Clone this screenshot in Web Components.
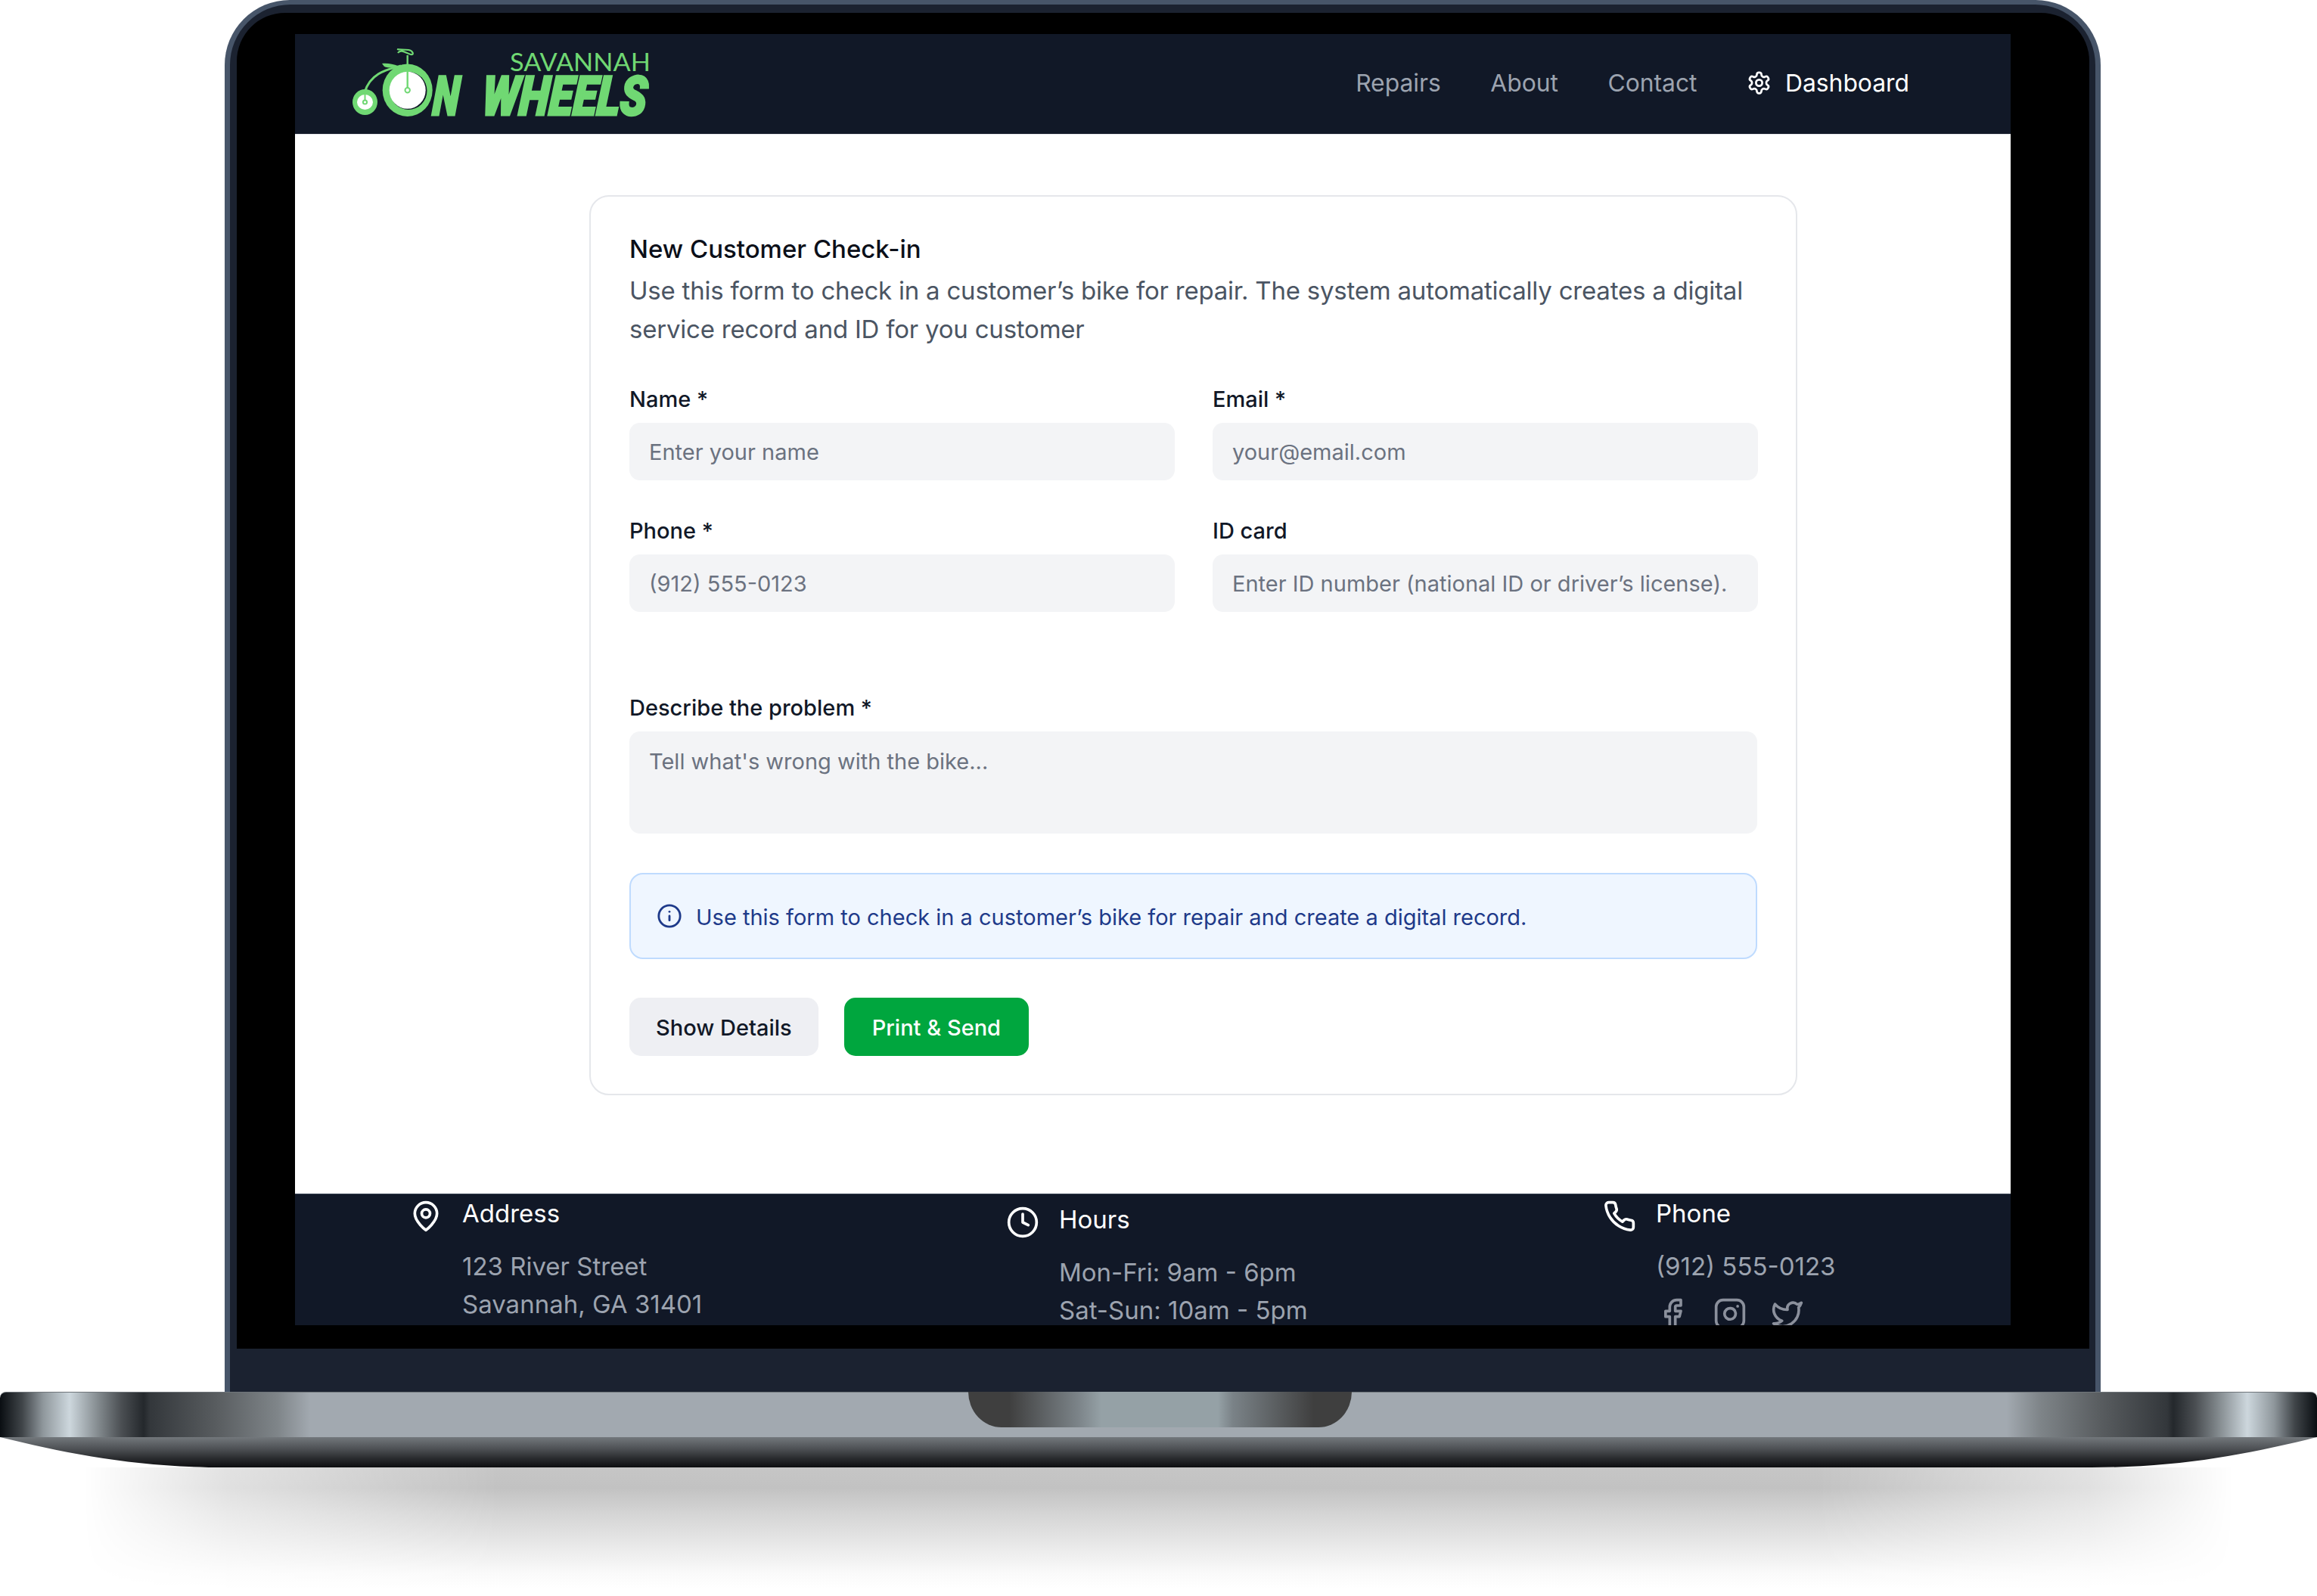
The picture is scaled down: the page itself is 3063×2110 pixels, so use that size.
<!DOCTYPE html>
<html lang="en">
<head>
<meta charset="utf-8">
<title>Savannah On Wheels</title>
<style>
  html, body { margin: 0; background: #fff; }
  body { font-family: Inter, "Liberation Sans", sans-serif; width: 3063px; height: 2110px; overflow: hidden; }
</style>
</head>
<body>
<laptop-mockup>
  <site-nav></site-nav>
  <checkin-form></checkin-form>
  <site-footer></site-footer>
</laptop-mockup>

<script>
const ICONS = {
  settings: '<path d="M12.22 2h-.44a2 2 0 0 0-2 2v.18a2 2 0 0 1-1 1.73l-.43.25a2 2 0 0 1-2 0l-.15-.08a2 2 0 0 0-2.73.73l-.22.38a2 2 0 0 0 .73 2.73l.15.1a2 2 0 0 1 1 1.72v.51a2 2 0 0 1-1 1.74l-.15.09a2 2 0 0 0-.73 2.73l.22.38a2 2 0 0 0 2.73.73l.15-.08a2 2 0 0 1 2 0l.43.25a2 2 0 0 1 1 1.73V20a2 2 0 0 0 2 2h.44a2 2 0 0 0 2-2v-.18a2 2 0 0 1 1-1.73l.43-.25a2 2 0 0 1 2 0l.15.08a2 2 0 0 0 2.73-.73l.22-.39a2 2 0 0 0-.73-2.73l-.15-.08a2 2 0 0 1-1-1.74v-.5a2 2 0 0 1 1-1.74l.15-.09a2 2 0 0 0 .73-2.73l-.22-.38a2 2 0 0 0-2.73-.73l-.15.08a2 2 0 0 1-2 0l-.43-.25a2 2 0 0 1-1-1.73V4a2 2 0 0 0-2-2z"/><circle cx="12" cy="12" r="3"/>',
  info: '<circle cx="12" cy="12" r="10"/><path d="M12 16v-4"/><path d="M12 8h.01"/>',
  pin: '<path d="M20 10c0 6-8 12-8 12s-8-6-8-12a8 8 0 0 1 16 0Z"/><circle cx="12" cy="10" r="3"/>',
  clock: '<circle cx="12" cy="12" r="10"/><polyline points="12 6 12 12 16 14"/>',
  phone: '<path d="M22 16.92v3a2 2 0 0 1-2.18 2 19.79 19.79 0 0 1-8.63-3.07 19.5 19.5 0 0 1-6-6 19.79 19.79 0 0 1-3.07-8.67A2 2 0 0 1 4.11 2h3a2 2 0 0 1 2 1.72 12.84 12.84 0 0 0 .7 2.81 2 2 0 0 1-.45 2.11L8.09 9.91a16 16 0 0 0 6 6l1.27-1.27a2 2 0 0 1 2.11-.45 12.84 12.84 0 0 0 2.81.7A2 2 0 0 1 22 16.92z"/>',
  facebook: '<path d="M18 2h-3a5 5 0 0 0-5 5v3H7v4h3v8h4v-8h3l1-4h-4V7a1 1 0 0 1 1-1h3z"/>',
  instagram: '<rect x="2" y="2" width="20" height="20" rx="5" ry="5"/><path d="M16 11.37A4 4 0 1 1 12.63 8 4 4 0 0 1 16 11.37z"/><line x1="17.5" y1="6.5" x2="17.51" y2="6.5"/>',
  twitter: '<path d="M22 4s-.7 2.1-2 3.4c1.6 10-9.4 17.3-18 11.6 2.2.1 4.4-.6 6-2C3 15.5.5 9.6 3 5c2.2 2.6 5.6 4.1 9 4-.9-4.2 4-6.6 7-3.8 1.1 0 3-1.2 3-1.2z"/>'
};

class UiIcon extends HTMLElement {
  connectedCallback() {
    const size = this.getAttribute('size') || 44;
    this.attachShadow({ mode: 'open' });
    this.shadowRoot.innerHTML = `
      <style>
        :host { display: block; flex: none; width: ${size}px; height: ${size}px; }
        svg { display: block; width: 100%; height: 100%; fill: none; stroke: currentColor; stroke-width: 2; stroke-linecap: round; stroke-linejoin: round; }
      </style>
      <svg viewBox="0 0 24 24">${ICONS[this.getAttribute('name')]}</svg>`;
  }
}
customElements.define('ui-icon', UiIcon);

class LaptopMockup extends HTMLElement {
  connectedCallback() {
    this.attachShadow({ mode: 'open' });
    this.shadowRoot.innerHTML = `
      <style>
        :host { display: block; width: 3063px; }
        .lid {
          margin-left: 297px;
          width: 2480px;
          height: 1840px;
          box-sizing: border-box;
          background: #475569;
          border-radius: 86px 86px 0 0;
          padding: 6px 7px 0;
          display: flex;
        }
        .bezel {
          flex: 1;
          min-width: 0;
          display: flex;
          background: #1b2230;
          border-radius: 80px 80px 0 0;
          padding: 11px 8px 57px 9px;
        }
        .glass {
          flex: 1;
          min-width: 0;
          display: flex;
          background: #000;
          border-radius: 64px 64px 0 0;
          padding: 28px 104px 31px 77px;
        }
        .screen {
          flex: 1;
          min-width: 0;
          display: flex;
          flex-direction: column;
          background: #fff;
          overflow: hidden;
        }
        .base { position: relative; height: 100px; }
        .deck {
          height: 60px;
          box-sizing: border-box;
          border-top: 1px solid #6f757a;
          border-radius: 8px 8px 0 0;
          background: linear-gradient(to right,
            #0a0e12 0, #3f4448 29px, #8f979c 57px, #cdd7dd 92px, #7f868a 132px, #4a4e52 161px, #24282c 190px,
            #33373b 198px, #595d60 287px, #7f8589 367px, #a2a9b0 410px,
            #a2a9b0 calc(100% - 410px), #7f8589 calc(100% - 367px), #595d60 calc(100% - 287px), #33373b calc(100% - 198px),
            #24282c calc(100% - 190px), #4a4e52 calc(100% - 161px), #7f868a calc(100% - 132px), #cdd7dd calc(100% - 92px),
            #8f979c calc(100% - 57px), #3f4448 calc(100% - 29px), #0a0e12 100%);
        }
        .lip {
          height: 40px;
          background: linear-gradient(to bottom, #73787c 0, #4c4f53 40%, #2a2c2f 70%, #0d0e10 100%);
          clip-path: path('M0 0 C90 22 180 40 298 40 H2765 C2883 40 2973 22 3063 0 Z');
        }
        .notch {
          position: absolute;
          left: 1280px;
          top: 0;
          width: 507px;
          height: 47px;
          border-radius: 0 0 44px 44px / 0 0 47px 47px;
          background: linear-gradient(to right, #3f3f3f 0, #3f3f3f 54px, #7c8489 146px, #95a1a6 176px, #95a1a6 330px, #7a8287 350px, #3f3f3f 457px, #3f3f3f 100%);
        }
        .shadow {
          height: 170px;
          background: linear-gradient(to bottom, #c6c6c6 0, #c2c2c2 27px, #d4d4d4 60px, #ececec 110px, #fafafa 140px, #fff 160px);
          -webkit-mask-image: linear-gradient(to right, transparent 110px, rgba(0,0,0,.5) 300px, #000 660px, #000 calc(100% - 660px), rgba(0,0,0,.5) calc(100% - 300px), transparent calc(100% - 110px));
          mask-image: linear-gradient(to right, transparent 110px, rgba(0,0,0,.5) 300px, #000 660px, #000 calc(100% - 660px), rgba(0,0,0,.5) calc(100% - 300px), transparent calc(100% - 110px));
        }
      </style>
      <div class="lid"><div class="bezel"><div class="glass"><div class="screen"><slot></slot></div></div></div></div>
      <div class="base">
        <div class="deck"></div>
        <div class="lip"></div>
        <div class="notch"></div>
      </div>
      <div class="shadow"></div>`;
  }
}
customElements.define('laptop-mockup', LaptopMockup);

class BrandLogo extends HTMLElement {
  connectedCallback() {
    this.attachShadow({ mode: 'open' });
    this.shadowRoot.innerHTML = `
      <style>
        :host { display: block; flex: none; width: 400px; height: 132px; }
        svg { display: block; width: 400px; height: 132px; }
        .top { font: 400 32px Lato, "Open Sans", sans-serif; fill: #70d873; }
        .big { font: italic 900 72px Roboto, "Liberation Sans", sans-serif; fill: #70d873; stroke: #70d873; stroke-width: 3; }
      </style>
      <!-- viewBox follows the page coordinates of the nav strip -->
      <svg viewBox="460 45 400 132">
        <path d="M482 122 C490 96 512 92 530 87" fill="none" stroke="#70d873" stroke-width="3"/>
        <path d="M505 84 C512 83 520 85 526 87 C522 91 513 90 508 88 Z" fill="#70d873"/>
        <ellipse cx="482.5" cy="135" rx="16.5" ry="17" fill="#70d873"/>
        <ellipse cx="482.5" cy="135" rx="10.5" ry="10" fill="#fff"/>
        <path d="M482.5 120 V135" stroke="#70d873" stroke-width="2"/>
        <circle cx="482.5" cy="135" r="2.6" fill="#fff" stroke="#70d873" stroke-width="2"/>
        <ellipse cx="538.7" cy="119.3" rx="33" ry="34.7" fill="#70d873"/>
        <ellipse cx="540" cy="120" rx="24.5" ry="25" fill="#111827"/>
        <ellipse cx="538.7" cy="119.3" rx="24" ry="24.5" fill="#fff"/>
        <path d="M538.7 119 V73" stroke="#70d873" stroke-width="2.4"/>
        <circle cx="538.7" cy="119.3" r="3.2" fill="#fff" stroke="#70d873" stroke-width="2"/>
        <path d="M526 70 C530 64 538 71 543 72 C548 73 546 67 540 66 C534 65 528 66 525 65" fill="none" stroke="#70d873" stroke-width="2.2"/>
        <text class="top" data-x="674" data-y="93.5" data-w="186">SAVANNAH</text>
        <text class="big" data-x="571" data-y="152" data-w="35" data-skew="-5">N</text>
        <text class="big" data-x="636" data-y="152" data-w="218" data-skew="-5">WHEELS</text>
      </svg>`;
    // squeeze each word to the logo's width, the fonts here are wider than the artwork
    this.shadowRoot.querySelectorAll('text').forEach(t => {
      const d = t.dataset;
      const sx = d.w / t.getComputedTextLength();
      t.setAttribute('transform', `translate(${d.x} ${d.y}) scale(${sx} 1) skewX(${d.skew || 0})`);
    });
  }
}
customElements.define('brand-logo', BrandLogo);

class SiteNav extends HTMLElement {
  connectedCallback() {
    this.attachShadow({ mode: 'open' });
    this.shadowRoot.innerHTML = `
      <style>
        :host { display: flex; flex: none; height: 133px; box-sizing: border-box; border-bottom: 1px solid #e5e7eb; background: #111827; align-items: center; padding: 0 134px 0 70px; justify-content: space-between; font-size: 31.8px; }
        nav { display: flex; align-items: center; gap: 65.5px; color: #9ca3af; margin-top: -4px; }
        a { display: flex; align-items: center; gap: 18px; line-height: 47px; }
        .on { color: #fff; }
      </style>
      <brand-logo></brand-logo>
      <nav>
        <a>Repairs</a>
        <a>About</a>
        <a>Contact</a>
        <a class="on"><ui-icon name="settings" size="33"></ui-icon>Dashboard</a>
      </nav>`;
  }
}
customElements.define('site-nav', SiteNav);

class FormField extends HTMLElement {
  connectedCallback() {
    const tall = this.hasAttribute('tall');
    this.attachShadow({ mode: 'open' });
    this.shadowRoot.innerHTML = `
      <style>
        :host { display: block; min-width: 0; }
        label { display: block; font-size: 29px; font-weight: 500; line-height: 42px; color: #111827; margin-bottom: 10px; }
        .box {
          box-sizing: border-box;
          height: ${tall ? 135 : 76}px;
          padding: ${tall ? 20 : 19}px 26px;
          border-radius: 14px;
          background: #f3f4f6;
          font-size: 29px;
          line-height: 40px;
          color: #6b7280;
          white-space: nowrap;
          overflow: hidden;
        }
      </style>
      <label>${this.getAttribute('label')}</label>
      <div class="box"><slot></slot></div>`;
  }
}
customElements.define('form-field', FormField);

class InfoNote extends HTMLElement {
  connectedCallback() {
    this.attachShadow({ mode: 'open' });
    this.shadowRoot.innerHTML = `
      <style>
        :host { display: flex; align-items: center; gap: 18px; box-sizing: border-box; height: 114px; padding: 0 34px; border: 2px solid #bfdbfe; border-radius: 18px; background: #eff6ff; color: #1e3a8a; font-size: 29px; }
        span { padding-top: 3px; }
      </style>
      <ui-icon name="info" size="34"></ui-icon>
      <span><slot></slot></span>`;
  }
}
customElements.define('info-note', InfoNote);

class UiButton extends HTMLElement {
  connectedCallback() {
    this.attachShadow({ mode: 'open' });
    this.shadowRoot.innerHTML = `
      <style>
        :host { display: flex; align-items: center; box-sizing: border-box; height: 77px; padding: 2px 35px 0; border-radius: 15px; font-size: 29px; font-weight: 500; background: #eeeff3; color: #111827; }
        :host([primary]) { background: #00a63e; color: #fff; padding: 2px 37px 0; }
      </style>
      <slot></slot>`;
  }
}
customElements.define('ui-button', UiButton);

class CheckinForm extends HTMLElement {
  connectedCallback() {
    this.attachShadow({ mode: 'open' });
    this.shadowRoot.innerHTML = `
      <style>
        :host { display: block; flex: 1; padding: 80px 0 0 389px; }
        .card { box-sizing: border-box; width: 1597px; height: 1190px; padding: 44px 51px 0; border: 2px solid #e5e7eb; border-radius: 26px; }
        h2 { margin: 0 0 4px; font-size: 33px; font-weight: 500; line-height: 51px; color: #0b0f19; }
        p { margin: 0; font-size: 33px; letter-spacing: -0.22px; line-height: 51px; color: #4b5563; }
        .grid { display: grid; grid-template-columns: 721px 721px; column-gap: 50px; row-gap: 46px; margin-top: 46px; }
        form-field.wide { display: block; margin-top: 106px; }
        info-note { margin-top: 52px; }
        .actions { display: flex; gap: 34px; margin-top: 51px; }
      </style>
      <div class="card">
        <h2>New Customer Check-in</h2>
        <p>Use this form to check in a customer’s bike for repair. The system automatically creates a digital service record and ID for you customer</p>
        <div class="grid">
          <form-field label="Name *">Enter your name</form-field>
          <form-field label="Email *">your@email.com</form-field>
          <form-field label="Phone *">(912) 555-0123</form-field>
          <form-field label="ID card">Enter ID number (national ID or driver’s license).</form-field>
        </div>
        <form-field class="wide" label="Describe the problem *" tall>Tell what's wrong with the bike...</form-field>
        <info-note>Use this form to check in a customer’s bike for repair and create a digital record.</info-note>
        <div class="actions">
          <ui-button>Show Details</ui-button>
          <ui-button primary>Print &amp; Send</ui-button>
        </div>
      </div>`;
  }
}
customElements.define('checkin-form', CheckinForm);

class FooterColumn extends HTMLElement {
  connectedCallback() {
    this.attachShadow({ mode: 'open' });
    this.shadowRoot.innerHTML = `
      <style>
        :host { display: grid; grid-template-columns: 44px 1fr; column-gap: 26px; align-content: start; }
        .head { color: #fff; line-height: 44px; margin-top: -4px; height: 40px; }
        .body { grid-column: 2; margin-top: 19px; color: #9ca3af; line-height: 50px; }
      </style>
      <ui-icon name="${this.getAttribute('icon')}" style="color:#fff"></ui-icon>
      <div class="head">${this.getAttribute('heading')}</div>
      <div class="body"><slot></slot></div>`;
  }
}
customElements.define('footer-column', FooterColumn);

class SiteFooter extends HTMLElement {
  connectedCallback() {
    this.attachShadow({ mode: 'open' });
    this.shadowRoot.innerHTML = `
      <style>
        :host { display: block; flex: none; height: 174px; box-sizing: border-box; overflow: hidden; border-top: 1px solid #374151; background: #111827; font-size: 33px; padding: 7px 0 0 151px; }
        .cols { display: grid; grid-template-columns: 789px 789px 1fr; }
        .mid { padding-top: 8px; }
        .social { display: flex; gap: 32px; margin-top: 16px; color: #8b909c; }
      </style>
      <div class="cols">
        <footer-column icon="pin" heading="Address">123 River Street<br>Savannah, GA 31401</footer-column>
        <footer-column class="mid" icon="clock" heading="Hours">Mon-Fri: 9am - 6pm<br>Sat-Sun: 10am - 5pm</footer-column>
        <footer-column icon="phone" heading="Phone">(912) 555-0123
          <div class="social">
            <ui-icon name="facebook"></ui-icon>
            <ui-icon name="instagram"></ui-icon>
            <ui-icon name="twitter"></ui-icon>
          </div>
        </footer-column>
      </div>`;
  }
}
customElements.define('site-footer', SiteFooter);
</script>
</body>
</html>
